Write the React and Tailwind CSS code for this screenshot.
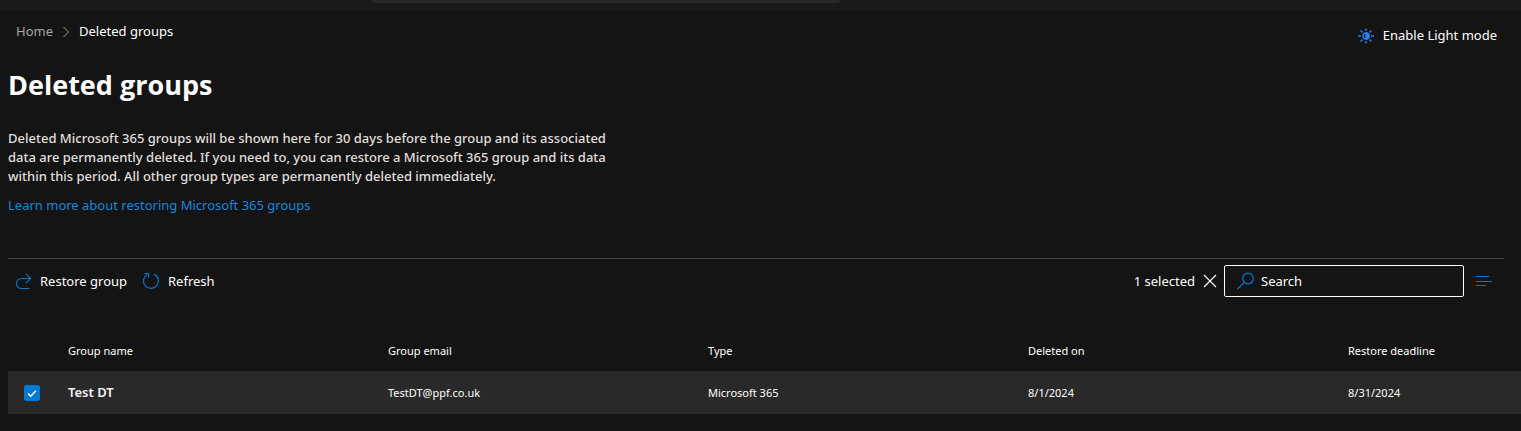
import { useState } from "react";

const groups = [
  {
    name: "Test DT",
    email: "TestDT@ppf.co.uk",
    type: "Microsoft 365",
    deletedOn: "8/1/2024",
    deadline: "8/31/2024",
  },
];

function ChevronIcon() {
  return (
    <svg width="8" height="12" viewBox="0 0 8 12" fill="none" stroke="#a19f9d" aria-hidden="true">
      <path d="M1.5 1 6.5 6l-5 5" />
    </svg>
  );
}

function SunIcon() {
  return (
    <svg width="16" height="16" viewBox="0 0 16 16" fill="none" stroke="#2386f0" strokeWidth="1.4" aria-hidden="true">
      <circle cx="8" cy="8" r="3" />
      <path d="M8 5a3 3 0 0 1 0 6z" fill="#2386f0" />
      <path d="M8 .5v2.5M8 13v2.500M0 8h3M13 8h3M2.500 2.500l2 2M11.500 11.500l2 2M2.500 13.500l2-2M11.500 4.500l2-2" />
    </svg>
  );
}

function RestoreIcon() {
  return (
    <svg width="16" height="16" viewBox="0 0 16 16" fill="none" stroke="#0078d4" strokeWidth="1.1" aria-hidden="true">
      <path d="M13.500 15.500H5.500A5 5 0 0 1 5.500 5.500h8.500M10 .800l4.600 4.700L10 10.200" />
    </svg>
  );
}

function RefreshIcon() {
  return (
    <svg width="18" height="18" viewBox="0 0 18 18" fill="none" stroke="#0078d4" strokeWidth="1.2" aria-hidden="true">
      <path d="M12 2.100a7.500 7.500 0 1 1-6.700.300M2.500 1.500h4v4" />
    </svg>
  );
}

function CloseIcon() {
  return (
    <svg width="14" height="14" viewBox="0 0 14 14" fill="none" stroke="#ffffff" strokeWidth="1.1" aria-hidden="true">
      <path d="m1 1 12 12M13 1 1 13" />
    </svg>
  );
}

function SearchIcon() {
  return (
    <svg width="18" height="18" viewBox="0 0 18 18" fill="none" stroke="#0078d4" strokeWidth="1.2" aria-hidden="true">
      <circle cx="11" cy="6.500" r="5.300" />
      <path d="M7.200 10.300.500 17" />
    </svg>
  );
}

function LinesIcon() {
  return (
    <svg width="16" height="10" viewBox="0 0 16 10" fill="none" stroke="#0078d4" strokeWidth="1.2" aria-hidden="true">
      <path d="M0 .500h13M0 5.500h16M0 9.500h10" />
    </svg>
  );
}

export default function App() {
  const [checked, setChecked] = useState(true);

  return (
    <div className="min-h-screen bg-[#141414] font-['Noto_Sans',sans-serif] text-[13px] leading-[19px] text-white">
      <div className="flex h-[11px] justify-center bg-[#1b1a18]">
        <div className="-ml-[309px] h-[3px] w-[468px] rounded-b-sm bg-[#292827]" />
      </div>

      <header className="flex items-start justify-between pt-[11px] pr-6 pl-4">
        <nav aria-label="Breadcrumb" className="flex items-center gap-[9px]">
          <a href="#home" className="text-[#a8a6a3]">Home</a>
          <ChevronIcon />
          <span>Deleted groups</span>
        </nav>
        <button type="button" className="mt-1 flex items-center gap-[9px]">
          <SunIcon />
          Enable Light mode
        </button>
      </header>

      <main className="pl-2">
        <h1 className="mt-[22px] font-['Open_Sans',sans-serif] text-[27px] leading-9 font-bold">Deleted groups</h1>
        <p className="mt-[26px] max-w-[612px] font-medium text-[#e1dfdd]">
          Deleted Microsoft 365 groups will be shown here for 30 days before the group and its associated data are
          permanently deleted. If you need to, you can restore a Microsoft 365 group and its data within this period.
          All other group types are permanently deleted immediately.
        </p>
        <a href="#learn" className="mt-[10px] inline-block text-[#1a86d9]">
          Learn more about restoring Microsoft 365 groups
        </a>

        <div className="mt-[43px] mr-[17px] flex items-center justify-between border-t border-[#484644] py-[6px] pl-2">
          <div className="flex items-center gap-[15px]">
            <button type="button" className="flex items-center gap-2">
              <RestoreIcon />
              Restore group
            </button>
            <button type="button" className="flex items-center gap-2">
              <RefreshIcon />
              Refresh
            </button>
          </div>
          <div className="flex items-center">
            <span>1 selected</span>
            <button type="button" aria-label="Clear selection" className="mr-[7px] ml-2">
              <CloseIcon />
            </button>
            <label className="flex h-8 w-60 items-center gap-[6px] rounded-xs border border-white pl-3">
              <SearchIcon />
              <input
                type="text"
                aria-label="Search"
                placeholder="Search"
                className="min-w-0 flex-1 bg-transparent outline-none placeholder:text-white"
              />
            </label>
            <button type="button" aria-label="View options" className="mr-3 ml-3">
              <LinesIcon />
            </button>
          </div>
        </div>

        <table className="mt-[27px] w-full table-fixed text-left text-[11px]">
          <colgroup>
            <col className="w-[60px]" />
            <col className="w-80" />
            <col className="w-80" />
            <col className="w-80" />
            <col className="w-80" />
            <col />
          </colgroup>
          <thead>
            <tr className="h-[41px]">
              <td />
              <th className="font-normal">Group name</th>
              <th className="font-normal">Group email</th>
              <th className="font-normal">Type</th>
              <th className="font-normal">Deleted on</th>
              <th className="font-normal">Restore deadline</th>
            </tr>
          </thead>
          <tbody>
            {groups.map((group) => (
              <tr key={group.email} className="h-[43px] bg-[#292929]">
                <td className="pl-4">
                  <span className="grid size-4">
                    <input
                      type="checkbox"
                      aria-label={"Select " + group.name}
                      checked={checked}
                      onChange={() => setChecked(!checked)}
                      className="col-start-1 row-start-1 size-4 appearance-none rounded-xs border border-[#a19f9d] checked:border-[#0078d4] checked:bg-[#0078d4]"
                    />
                    {checked && (
                      <svg
                        viewBox="0 0 16 16"
                        fill="none"
                        stroke="#ffffff"
                        strokeWidth="1.4"
                        aria-hidden="true"
                        className="pointer-events-none col-start-1 row-start-1 size-4"
                      >
                        <path d="m4 8.500 2.700 2.700L12 5.700" />
                      </svg>
                    )}
                  </span>
                </td>
                <td className="text-[13px] font-semibold text-[#f3f2f1]">{group.name}</td>
                <td>{group.email}</td>
                <td>{group.type}</td>
                <td>{group.deletedOn}</td>
                <td>{group.deadline}</td>
              </tr>
            ))}
          </tbody>
        </table>
      </main>
    </div>
  );
}
